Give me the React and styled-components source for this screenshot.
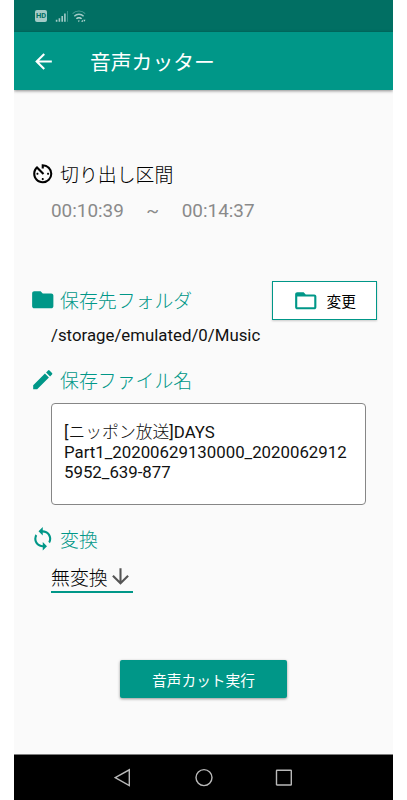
import React from 'react'
import styled, { createGlobalStyle } from 'styled-components'
import {
    MdArrowBack,
    MdArrowDownward,
    MdAvTimer,
    MdEdit,
    MdFolder,
    MdFolderOpen,
    MdSync,
} from 'react-icons/md'

const App = () => {
    return (
        <>
            <GlobalStyle />
            <Phone>
                <StatusBar>
                    <HdBadge>HD</HdBadge>
                    <Signal />
                    <Wifi />
                </StatusBar>
                <AppBar>
                    <MdArrowBack size={25} />
                    <h1>音声カッター</h1>
                </AppBar>
                <Main>
                    <Heading $color='#000'>
                        <MdAvTimer />
                        <span>切り出し区間</span>
                    </Heading>
                    <TimeRange>
                        <span>00:10:39</span>
                        <span>~</span>
                        <span>00:14:37</span>
                    </TimeRange>

                    <FolderRow>
                        <Heading>
                            <MdFolder />
                            <span>保存先フォルダ</span>
                        </Heading>
                        <ChangeButton>
                            <MdFolderOpen size={25.5} />
                            変更
                        </ChangeButton>
                    </FolderRow>
                    <Path>/storage/emulated/0/Music</Path>

                    <Heading>
                        <MdEdit />
                        <span>保存ファイル名</span>
                    </Heading>
                    <FileName>
                        [<Light>ニッポン放送</Light>]DAYS
                        <br />
                        Part1_20200629130000_2020062912
                        <br />
                        5952_639-877
                    </FileName>

                    <Heading>
                        <MdSync />
                        <span>変換</span>
                    </Heading>
                    <Select>
                        <span>無変換</span>
                        <MdArrowDownward size={25} />
                    </Select>

                    <RunButton>音声カット実行</RunButton>
                </Main>
                <NavBar>
                    <svg width='18' height='20' viewBox='0 0 18 20'>
                        <path d='M15.3 1.8v15.8L1.2 9.7z' />
                    </svg>
                    <svg width='18' height='20' viewBox='0 0 18 20'>
                        <circle cx='9' cy='9.6' r='8' />
                    </svg>
                    <svg width='18' height='20' viewBox='0 0 18 20'>
                        <rect x='1.5' y='2.2' width='14.8' height='14.8' rx='0.5' />
                    </svg>
                </NavBar>
            </Phone>
        </>
    )
}

export default App

const Signal = () => (
    <svg width='14' height='14' viewBox='0 0 14 14'>
        <path d='M1.6 10.7v2.1M4.4 9.2v3.6M7.2 7v5.8M9.9 4.4v8.4' stroke='#a3cbc7' strokeWidth='1.6' />
        <path d='M12.5 2v10.8' stroke='#3d958d' strokeWidth='1' />
    </svg>
)

const Wifi = () => (
    <svg width='14' height='14' viewBox='0 0 14 14' fill='none'>
        <path d='M0.6 4.6a9 9 0 0 1 12.6 0' stroke='#489b93' strokeWidth='1.1' />
        <path d='M2.3 7.2a6.5 6.5 0 0 1 9.3 0' stroke='#a3cbc7' strokeWidth='1.3' />
        <path d='M4.4 9.8a3.6 3.6 0 0 1 5.2 0' stroke='#b5d6d2' strokeWidth='1.5' />
        <path d='M5.8 11.6h2l-1 1.6zM9.2 12.8l1.1-2 1.1 2zM11.3 10.8h2.2l-1.1 2z' fill='#b5d6d2' />
    </svg>
)

const GlobalStyle = createGlobalStyle`
    * {
        box-sizing: border-box;
    }

    body {
        margin: 0;
        background: #fff;
        font-family: Roboto, "Noto Sans CJK JP", sans-serif;
    }
`

const Phone = styled.div`
    display: flex;
    flex-direction: column;
    width: 379px;
    height: 800px;
    margin-left: 14px;
    overflow: hidden;
    background: #fafafa;
`

const StatusBar = styled.div`
    display: flex;
    align-items: center;
    height: 32px;
    padding-left: 21px;
    background: #016f63;
`

const HdBadge = styled.span`
    width: 12px;
    height: 12px;
    margin-right: 8px;
    border-radius: 2px;
    background: #a3cbc7;
    color: #016f63;
    font-size: 7.5px;
    font-weight: 700;
    line-height: 12px;
    text-align: center;

    & + svg {
        margin-right: 3px;
    }
`

const AppBar = styled.header`
    display: flex;
    align-items: center;
    flex-shrink: 0;
    height: 58px;
    padding-left: 17px;
    background: #009788;
    color: #fff;
    box-shadow: 0 1px 3px rgba(0, 0, 0, 0.45);

    h1 {
        margin: 0 0 0 34px;
        font-size: 20.8px;
        font-weight: 400;
    }
`

const Main = styled.main`
    display: flex;
    flex: 1;
    flex-direction: column;
    padding: 71px 16px 0;
`

const Heading = styled.h2`
    display: flex;
    align-items: center;
    gap: 4.5px;
    height: 26px;
    margin: 0;
    color: ${({ $color }) => $color || '#009788'};
    font-size: 18.9px;
    font-weight: 300;

    svg {
        width: 25.5px;
        height: 25.5px;
    }

    span {
        margin-bottom: 1px;
    }
`

const TimeRange = styled.div`
    display: flex;
    gap: 22.5px;
    margin: 12px 0 0 21px;
    color: #8a8a8a;
    font-size: 18.9px;
    line-height: 24px;
`

const FolderRow = styled.div`
    display: flex;
    align-items: center;
    justify-content: space-between;
    margin-top: 58px;

    h2 {
        margin-bottom: 1px;
    }
`

const ChangeButton = styled.button`
    display: flex;
    align-items: center;
    justify-content: center;
    gap: 8px;
    width: 105px;
    height: 39px;
    padding: 0;
    border: 1px solid #009788;
    background: #fff;
    color: #000;
    font-family: inherit;
    font-size: 14.7px;
    box-shadow: 0 1px 2px rgba(0, 0, 0, 0.2);

    svg {
        color: #009788;
    }
`

const Path = styled.p`
    margin: 3px 0 20px 21px;
    color: #111;
    font-size: 16.82px;
    line-height: 24px;
`

const FileName = styled.div`
    height: 102px;
    margin: 10px 11px 21px 21px;
    padding: 18px 0 0 12px;
    border: 1px solid #868686;
    border-radius: 4px;
    background: #fff;
    color: #111;
    font-size: 16.82px;
    line-height: 20px;
    white-space: nowrap;
`

const Light = styled.span`
    font-weight: 300;
`

const Select = styled.div`
    display: flex;
    align-items: center;
    align-self: flex-start;
    width: 82px;
    height: 32px;
    margin: 9px 0 0 21px;
    border-bottom: 2px solid #009788;
    color: #000;
    font-size: 18.9px;
    font-weight: 300;

    svg {
        flex-shrink: 0;
        color: #555;
    }
`

const RunButton = styled.button`
    align-self: center;
    width: 167px;
    height: 38px;
    margin: 67px 0 0;
    padding: 0;
    border: 0;
    border-radius: 2px;
    background: #009788;
    color: #fff;
    font-family: inherit;
    font-size: 14.7px;
    font-weight: 400;
    box-shadow: 0 1px 3px rgba(0, 0, 0, 0.4);
`

const NavBar = styled.nav`
    display: flex;
    align-items: center;
    justify-content: center;
    gap: 62.5px;
    height: 46px;
    border-top: 1px solid #7d7d7d;
    background: #000;

    svg {
        fill: none;
        stroke: #b9b9b9;
        stroke-width: 1.4;
    }
`
